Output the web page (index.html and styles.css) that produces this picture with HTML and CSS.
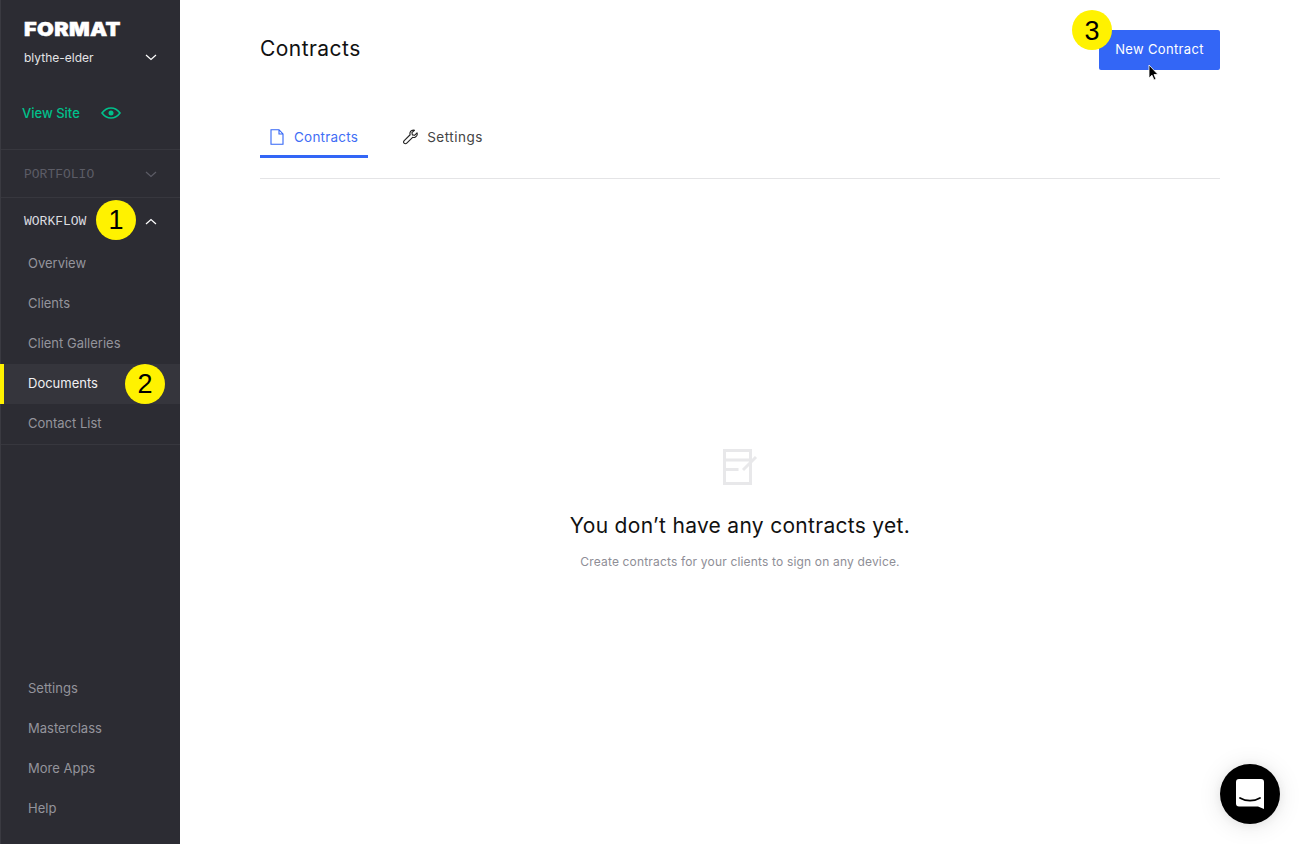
FILE: index.html
```html
<!DOCTYPE html>
<html lang="en">
<head>
<meta charset="utf-8">
<title>Contracts</title>
<link rel="stylesheet" href="styles.css">
</head>
<body>
<div class="app">
  <aside class="sidebar">
    <div class="brand">
      <div class="logo">FORMAT</div>
      <div class="account">
        <span>blythe-elder</span>
        <svg class="chev" width="12" height="7" viewBox="0 0 12 7"><path d="M1 1l5 4.5L11 1" fill="none" stroke="#fff" stroke-width="1.2"/></svg>
      </div>
    </div>
    <a class="view-site">
      <span>View Site</span>
      <svg width="20" height="12" viewBox="0 0 20 12"><path d="M1 6c2.500-3.400 5.600-5 9-5s6.500 1.600 9 5c-2.500 3.400-5.600 5-9 5S3.500 9.400 1 6z" fill="none" stroke="#00c08b" stroke-width="1.600"/><circle cx="10" cy="6" r="2.500" fill="#00c08b"/></svg>
    </a>
    <div class="section section-muted">
      <span>PORTFOLIO</span>
      <svg class="chev" width="12" height="7" viewBox="0 0 12 7"><path d="M1 1l5 4.500L11 1" fill="none" stroke="#5c5c66" stroke-width="1.200"/></svg>
    </div>
    <div class="section section-open">
      <span>WORKFLOW</span>
      <svg class="chev" width="12" height="7" viewBox="0 0 12 7"><path d="M1 6l5-4.500L11 6" fill="none" stroke="#fff" stroke-width="1.200"/></svg>
    </div>
    <nav class="nav nav-workflow">
      <a class="nav-item">Overview</a>
      <a class="nav-item">Clients</a>
      <a class="nav-item">Client Galleries</a>
      <a class="nav-item nav-active">Documents</a>
      <a class="nav-item">Contact List</a>
    </nav>
    <nav class="nav nav-bottom">
      <a class="nav-item">Settings</a>
      <a class="nav-item">Masterclass</a>
      <a class="nav-item">More Apps</a>
      <a class="nav-item">Help</a>
    </nav>
  </aside>
  <main class="main">
    <header class="header">
      <h1 class="title">Contracts</h1>
      <button class="primary">New Contract</button>
    </header>
    <div class="tabs">
      <a class="tab tab-active">
        <svg width="14" height="16" viewBox="0 0 14 16"><path d="M1 .7h8l4 4.300v10.300H1zM9 .7v4.300h4" fill="none" stroke="#3366f6" stroke-width="1.100"/></svg>
        <span>Contracts</span>
      </a>
      <a class="tab tab-plain">
        <svg width="15" height="16" viewBox="0 0 16 16"><path d="M15 3.600l-2.700 2.600-2.300-.5-.5-2.300L12.200.8c-2-.6-4.200.6-4.700 2.500-.2.800-.1 1.600.1 2.300L1.300 11.900c-.8.800-.8 1.900-.1 2.700.8.800 2 .8 2.800 0l6.300-6.300c.7.300 1.500.3 2.300.100 1.900-.6 3-2.800 2.400-4.800z" fill="none" stroke="#222" stroke-width="1.200" stroke-linejoin="round"/></svg>
        <span>Settings</span>
      </a>
    </div>
    <section class="empty">
      <svg class="empty-icon" width="36" height="36" viewBox="0 0 36 36"><path d="M1.500 1.500h26v33h-26zM1.500 11h26M1.500 20.500h14" fill="none" stroke="#e8e8ea" stroke-width="3"/><path d="M20 21l13-13" fill="none" stroke="#e8e8ea" stroke-width="3"/></svg>
      <h2 class="empty-title">You don’t have any contracts yet.</h2>
      <p class="empty-text">Create contracts for your clients to sign on any device.</p>
    </section>
  </main>
</div>
<div class="marker marker-1">1</div>
<div class="marker marker-2">2</div>
<div class="marker marker-3">3</div>
<svg class="cursor" width="12" height="18" viewBox="0 0 12 18"><path d="M1 1v13l3-2.800 2 4.800 2-.9-2-4.600h4z" fill="#000" stroke="#fff" stroke-width=".8"/></svg>
<button class="chat" aria-label="Chat">
  <svg width="30" height="32" viewBox="0 0 30 32"><path d="M4 1h22a3 3 0 0 1 3 3v27l-6-2.600H4a3 3 0 0 1-3-3V4a3 3 0 0 1 3-3z" fill="#fff"/><path d="M5 20c6 3.600 14 3.600 20 0" fill="none" stroke="#000" stroke-width="1.800" stroke-linecap="round"/></svg>
</button>
</body>
</html>
```
FILE: styles.css
```css
* { box-sizing: border-box; }
html, body { margin: 0; height: 100%; overflow: hidden; }
body { background: #fff; font-family: Inter, "Liberation Sans", sans-serif; color: #111; }
.app { display: flex; height: 844px; }

.sidebar { width: 180px; flex: none; display: flex; flex-direction: column; background: #2c2c33; border-left: 1px solid #3a3a41; }
.brand { height: 92px; padding: 19px 23px 0 23px; }
.logo { font-size: 19px; line-height: 22px; font-weight: 900; color: #fff; letter-spacing: .3px; -webkit-text-stroke: .5px #fff; transform: scaleX(1.14); transform-origin: left center; }
.account { display: flex; justify-content: space-between; align-items: center; margin-top: 5px; height: 22px; font-size: 12px; color: #e4e4e6; }
.view-site { height: 58px; display: flex; align-items: center; gap: 21px; padding: 0 0 16px 21px; border-bottom: 1px solid #37373e; font-size: 13px; font-weight: 500; color: #00c08b; }
.section { height: 48px; display: flex; align-items: center; justify-content: space-between; padding: 0 23px 0 23px; font-family: "Liberation Mono", monospace; font-size: 13px; }
.section-muted { color: #5c5c66; border-bottom: 1px solid #37373e; padding-top: 1px; }
.section-open { color: #dcdce0; padding-bottom: 2px; }
.nav { display: flex; flex-direction: column; }
.nav-workflow { border-bottom: 1px solid #37373e; margin-top: -2px; }
.nav-workflow .nav-item { padding-bottom: 2px; }
.nav-bottom { margin-top: auto; padding-bottom: 16px; }
.nav-item { height: 40px; display: flex; align-items: center; padding-left: 27px; font-size: 13px; color: #94949c; }
.nav-active { position: relative; background: #35353c; color: #f0f0f2; }
.nav-active::before { content: ""; position: absolute; left: -1px; top: 0; bottom: 0; width: 4px; background: #fff200; }

.main { flex: 1; padding: 0 80px; display: flex; flex-direction: column; }
.header { height: 97px; display: flex; justify-content: space-between; align-items: flex-start; padding-top: 30px; }
.title { margin: 0; height: 40px; line-height: 37px; font-size: 21px; font-weight: 400; letter-spacing: .45px; color: #111; }
.primary { width: 121px; height: 40px; padding: 0 0 2px; border: 0; border-radius: 2px; background: #3366f6; color: #fff; font: 400 13px Inter, "Liberation Sans", sans-serif; letter-spacing: .35px; }
.tabs { height: 82px; display: flex; gap: 25px; align-items: flex-start; padding-top: 21px; border-bottom: 1px solid #e4e4e6; }
.tab { height: 40px; display: flex; align-items: center; gap: 10px; padding: 0 10px 3px; font-size: 13.500px; letter-spacing: .22px; color: #444; }
.tab-plain { gap: 9px; letter-spacing: .5px; }
.tab-active { color: #3f6ef5; border-bottom: 3px solid #3366f6; padding-bottom: 0; }
.empty { display: flex; flex-direction: column; align-items: center; padding-top: 270px; }
.empty-icon { display: block; margin-left: 2px; }
.empty-title { margin: 26px 0 0; font-size: 21px; line-height: 30px; font-weight: 400; letter-spacing: .3px; color: #111; }
.empty-text { margin: 13px 0 0; font-size: 12px; line-height: 16px; letter-spacing: .17px; color: #8e8e96; }

.marker { position: absolute; width: 40px; height: 40px; border-radius: 50%; background: #fff200; color: #000; display: flex; align-items: center; justify-content: center; font: 400 27px "Liberation Sans", sans-serif; }
.marker-1 { left: 96px; top: 200px; }
.marker-2 { left: 125px; top: 364px; }
.marker-3 { left: 1072px; top: 10px; padding-top: 2px; }
.cursor { position: absolute; left: 1148px; top: 64px; }
.chat { position: absolute; left: 1220px; top: 764px; width: 60px; height: 60px; padding: 0; border: 0; border-radius: 50%; background: #000; display: flex; align-items: center; justify-content: center; box-shadow: 0 1px 10px rgba(0,0,0,.06), 0 2px 24px rgba(0,0,0,.1); }
```
